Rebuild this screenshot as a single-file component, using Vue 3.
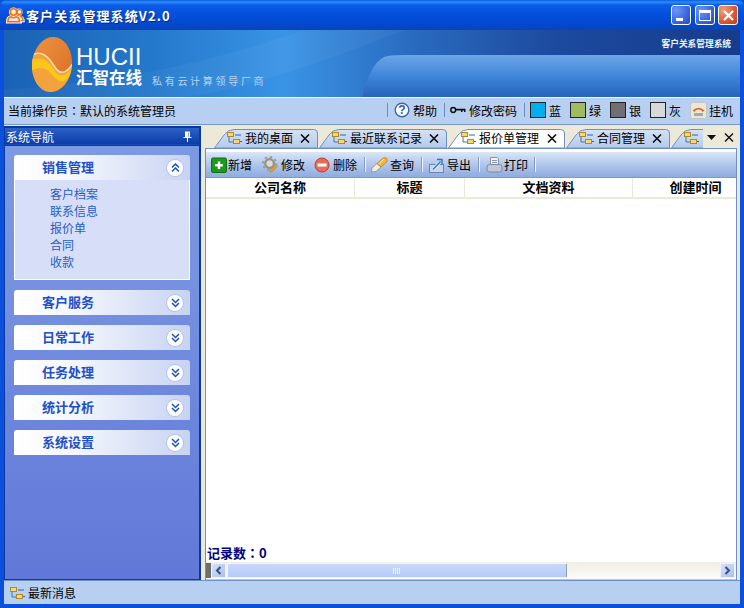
<script setup>
const tabs = [
  { label: '我的桌面', w: 105 },
  { label: '最近联系记录', w: 129 },
  { label: '报价单管理', w: 118, active: true },
  { label: '合同管理', w: 105 },
  { label: '', w: 45, cut: true }
]
const tabPath = (w) => `M1.5 19 L11 6 Q15 0.5 21 0.5 L${w - 4.5} 0.5 Q${w - 0.5} 0.5 ${w - 0.5} 4 L${w - 0.5} 19 Z`
const tools = [
  { key: 'add', label: '新增', w: 51, slot: 17 },
  { key: 'edit', label: '修改', w: 52, slot: 19 },
  { key: 'del', label: '删除', w: 57, slot: 19, sep: 5 },
  { key: 'find', label: '查询', w: 57, slot: 19, sep: 5 },
  { key: 'out', label: '导出', w: 58, slot: 19, sep: 6 },
  { key: 'print', label: '打印', w: 52, slot: 18, sep: 2 }
]
const cols = [
  { label: '公司名称', w: 149 },
  { label: '标题', w: 110 },
  { label: '文档资料', w: 168 },
  { label: '创建时间', w: 126 }
]
const links = ['客户档案', '联系信息', '报价单', '合同', '收款']
const groups = ['客户服务', '日常工作', '任务处理', '统计分析', '系统设置']
const swatches = [
  { label: '蓝', color: '#00b0ee' },
  { label: '绿', color: '#a0bc60' },
  { label: '银', color: '#707074' },
  { label: '灰', color: '#d8d8d8' }
]
</script>

<template>
  <div class="win">
    <header class="title">
      <svg class="appicon" width="19" height="18" viewBox="0 0 19 18">
        <path d="M1 16.5 Q1 11 4 10.5 L11 10.5 Q15 11 15 16.5 Z" fill="#fff" stroke="#fff" stroke-width="2" />
        <circle cx="7.5" cy="6" r="4.6" fill="#fff" />
        <circle cx="13" cy="6" r="3.6" fill="#fff" />
        <path d="M13 10 Q18 10.5 18 15.5 L15 15.5" fill="#fff" stroke="#fff" stroke-width="1.5" />
        <circle cx="7.5" cy="6" r="3.2" fill="#ffe8cc" stroke="#f07010" stroke-width="1.6" />
        <circle cx="13.4" cy="6" r="2.4" fill="none" stroke="#f07010" stroke-width="1.4" />
        <path d="M1.8 15.8 Q2 11 5 10.8 Q7.5 12.6 10 10.8 Q13.4 11 13.6 15.8 Z" fill="#fdd" stroke="#f07010" stroke-width="1.6" />
        <path d="M13.6 10.2 Q17 10.8 17.2 14.6 H14.8" fill="none" stroke="#f07010" stroke-width="1.4" />
      </svg>
      <span class="title-text">客户关系管理系统V2.0</span>
      <div class="caps">
        <div class="cap blue"><i class="min"></i></div>
        <div class="cap blue"><i class="max"></i></div>
        <div class="cap red">
          <svg width="13" height="13" viewBox="0 0 13 13"><path d="M2 2 L11 11 M11 2 L2 11" stroke="#fff" stroke-width="2.2" /></svg>
        </div>
      </div>
    </header>

    <div class="frame">
      <div class="banner">
        <svg class="banner-art" width="736" height="67" viewBox="0 0 736 67">
          <defs>
            <linearGradient id="bg" x1="0" y1="0" x2="1" y2="0">
              <stop offset="0" stop-color="#1a62b4" />
              <stop offset="0.2" stop-color="#2478cc" />
              <stop offset="0.38" stop-color="#3a94e6" />
              <stop offset="0.55" stop-color="#2a6cc0" />
              <stop offset="0.75" stop-color="#1c4a9e" />
              <stop offset="1" stop-color="#163c8c" />
            </linearGradient>
            <linearGradient id="wave" x1="0" y1="0" x2="0" y2="1">
              <stop offset="0" stop-color="#6ca6e6" />
              <stop offset="0.5" stop-color="#3f86da" />
              <stop offset="1" stop-color="#2764bc" />
            </linearGradient>
            <linearGradient id="orb" x1="0" y1="0" x2="1" y2="1">
              <stop offset="0" stop-color="#f09a48" />
              <stop offset="1" stop-color="#d8641c" />
            </linearGradient>
            <clipPath id="orbclip">
              <ellipse cx="48" cy="34.5" rx="20" ry="27.5" transform="rotate(5 48 34.5)" />
            </clipPath>
          </defs>
          <rect width="736" height="67" fill="url(#bg)" />
          <path d="M0 60 Q160 50 300 0 L400 0 Q250 60 180 67 L0 67 Z" fill="#ffffff" opacity="0.04" />
          <path d="M358 67 Q368 28 384 26 Q390 25 400 25 L736 25 L736 67 Z" fill="url(#wave)" />
          <g clip-path="url(#orbclip)">
            <rect x="20" y="0" width="56" height="70" fill="url(#orb)" />
            <path d="M20 32 C32 18 42 22 50 36 C56 46 62 44 70 32 L70 70 L20 70 Z" fill="#f4a23c" />
            <path d="M20 32 C32 18 42 22 50 36 C56 46 62 44 70 32" fill="none" stroke="#f8dcb0" stroke-width="1.6" />
            <path d="M26 30 C38 26 44 30 50 40 C55 48 62 47 68 38 C64 54 56 54 49 46 C43 38 36 35 26 42 Z" fill="#fcc818" />
          </g>
          <text x="72" y="35" class="brand-en">HUCII</text>
        </svg>
        <div class="brand">
          <span class="brand-cn">汇智在线</span>
          <span class="brand-sub">私有云计算领导厂商</span>
        </div>
        <div class="banner-name">客户关系管理系统</div>
      </div>

      <div class="opbar">
        <span class="op">当前操作员<span class="colon">：</span>默认的系统管理员</span>
        <div class="opright">
          <i class="sep"></i>
          <span class="opitem help">
            <svg width="16" height="16" viewBox="0 0 16 16"><circle cx="8" cy="8" r="6.8" fill="#fff" stroke="#3d67a8" stroke-width="1.4" /><text x="8" y="12" text-anchor="middle" class="q">?</text></svg>
            帮助
          </span>
          <i class="sep"></i>
          <span class="opitem pwd">
            <svg width="16" height="8" viewBox="0 0 16 8"><circle cx="3.2" cy="4" r="2.4" fill="none" stroke="#111" stroke-width="1.5" /><path d="M5.5 2.7 H15.5 V6 H14 V4.6 H12.5 V6 H11 V4.6 H5.5 Z" fill="#111" /></svg>
            修改密码
          </span>
          <i class="sep"></i>
          <span v-for="s in swatches" :key="s.label" class="swatch-item">
            <i class="swatch" :style="{ background: s.color }"></i>{{ s.label }}
          </span>
          <span class="opitem hang">
            <svg width="17" height="17" viewBox="0 0 17 17">
              <rect x="0.5" y="0.5" width="16" height="16" rx="2" fill="#e9e6da" stroke="#c4c4c0" />
              <path d="M2.5 8.5 Q8.5 3 14.5 8.5 L12.5 10 L11 8 Q8.5 7 6 8 L4.5 10 Z" fill="#e8641c" />
              <rect x="4" y="11" width="9" height="3" fill="#a8a8a8" />
            </svg>
            挂机
          </span>
        </div>
      </div>

      <div class="main">
        <aside class="nav">
          <div class="nav-head">
            <span>系统导航</span>
            <svg width="9" height="11" viewBox="0 0 9 11"><path d="M2 0.5 H7 V6 H8.5 V7 H5 V11 H4 V7 H0.5 V6 H2 Z M5.5 1.5 V6 H6 V1.5 Z" fill="#fff" fill-rule="evenodd" /></svg>
          </div>
          <div class="nav-body">
            <section class="group open">
              <div class="g-head">
                <span class="g-name">销售管理</span>
                <span class="chev">
                  <svg width="9" height="10" viewBox="0 0 9 10"><path d="M1 4.5 L4.5 1 L8 4.5 M1 8.5 L4.5 5 L8 8.5" fill="none" stroke="#1c4fc0" stroke-width="1.5" /></svg>
                </span>
              </div>
              <ul class="g-links">
                <li v-for="l in links" :key="l">{{ l }}</li>
              </ul>
            </section>
            <section v-for="g in groups" :key="g" class="group">
              <div class="g-head">
                <span class="g-name">{{ g }}</span>
                <span class="chev">
                  <svg width="9" height="10" viewBox="0 0 9 10"><path d="M1 1 L4.5 4.5 L8 1 M1 5 L4.5 8.5 L8 5" fill="none" stroke="#1c4fc0" stroke-width="1.5" /></svg>
                </span>
              </div>
            </section>
          </div>
        </aside>

        <div class="work">
          <div class="tabstrip">
            <div class="tabs">
              <div v-for="t in tabs" :key="t.w + t.label" class="tab" :class="{ active: t.active, cut: t.cut }" :style="{ width: t.w + 'px' }">
                <svg class="tab-shape" :width="t.w" height="20" :viewBox="`0 0 ${t.w} 20`">
                  <defs>
                    <linearGradient id="tabg" x1="0" y1="0" x2="0" y2="1">
                      <stop offset="0" stop-color="#d6e2f6" />
                      <stop offset="1" stop-color="#b4cbec" />
                    </linearGradient>
                  </defs>
                  <path :d="tabPath(t.w)" :fill="t.active ? '#ffffff' : 'url(#tabg)'" stroke="#6f8fc8" />
                </svg>
                <svg class="tree" width="15" height="12" viewBox="0 0 15 12">
                  <rect x="0.5" y="0.5" width="6" height="4" fill="#f6d67a" stroke="#b08a28" />
                  <path d="M2 5 V10 H6" fill="none" stroke="#3a7ab0" />
                  <rect x="6.5" y="7.5" width="6" height="4" fill="#f6d67a" stroke="#b08a28" />
                  <path d="M8 3 H14 M13 9.5 H15" stroke="#2a6aa8" />
                </svg>
                <span v-if="t.label" class="tab-label">{{ t.label }}</span>
                <svg v-if="!t.cut" class="tab-x" width="10" height="9" viewBox="0 0 10 9"><path d="M1 0.5 L9 8.5 M9 0.5 L1 8.5" stroke="#111" stroke-width="1.6" /></svg>
              </div>
            </div>
            <div class="tab-ctrl">
              <svg width="9" height="5" viewBox="0 0 9 5"><path d="M0 0 H9 L4.5 5 Z" fill="#111" /></svg>
              <svg width="10" height="9" viewBox="0 0 10 9"><path d="M1 0.5 L9 8.5 M9 0.5 L1 8.5" stroke="#111" stroke-width="1.4" /></svg>
            </div>
          </div>

          <div class="pane">
            <div class="toolbar">
              <div v-for="t in tools" :key="t.key" class="tool" :style="{ width: t.w + 'px' }">
                <span class="ico" :style="{ width: t.slot + 'px' }">
                  <svg v-if="t.key === 'add'" width="16" height="16" viewBox="0 0 16 16"><rect x="0.5" y="1" width="15" height="14.5" rx="1.5" fill="#1c9a1c" stroke="#107010" /><path d="M8 4.5 V12 M4.2 8.2 H11.8" stroke="#fff" stroke-width="2.4" /></svg>
                  <svg v-else-if="t.key === 'edit'" width="17" height="17" viewBox="0 0 18 18"><circle cx="8" cy="8" r="4.6" fill="#dcdcd0" stroke="#94948a" stroke-width="2.4" /><circle cx="8" cy="8" r="7" fill="none" stroke="#9c9c90" stroke-width="2" stroke-dasharray="2.6 2.9" /><path d="M9 15 L14.5 9 L16.6 10.8 L11 16.6 L8.6 17.2 Z" fill="#ee9c34" stroke="#b87418" stroke-width="0.5" /></svg>
                  <svg v-else-if="t.key === 'del'" width="16" height="16" viewBox="0 0 16 16"><circle cx="8" cy="8" r="7" fill="#ec6a58" stroke="#b84030" /><rect x="3.5" y="6.5" width="9" height="3" fill="#fff" /></svg>
                  <svg v-else-if="t.key === 'find'" width="17" height="16" viewBox="0 0 17 16"><path d="M0.5 15 L1 11 L6 6.5 L10 10 L5 14.5 Z" fill="#f2eedc" stroke="#8a8470" stroke-width="0.7" /><path d="M6 6.5 L12 1 Q14.5 0 16 1.5 Q17 3.5 15.5 5 L10 10 Z" fill="#f2b838" stroke="#b07c18" stroke-width="0.7" /><path d="M7.5 7 L13 2.2" stroke="#fbe8a8" /></svg>
                  <svg v-else-if="t.key === 'out'" width="17" height="16" viewBox="0 0 17 16"><rect x="1.5" y="7.5" width="14" height="8" fill="#c8d6ee" stroke="#6a84b4" /><path d="M5 12.5 L12 5" fill="none" stroke="#e8f0fb" stroke-width="3" /><path d="M5 12.5 L12.5 4.5" fill="none" stroke="#2c70c8" stroke-width="1.3" /><path d="M9 2.5 H14 V7.5" fill="none" stroke="#2c70c8" stroke-width="1.3" /></svg>
                  <svg v-else width="17" height="16" viewBox="0 0 17 16"><path d="M4.5 0.5 H11 L12.5 2 V8.5 H4.5 Z" fill="#f4f4f0" stroke="#8a94a8" /><path d="M6 3.5 H11 M6 5.5 H11" stroke="#8a94a8" /><rect x="1" y="7.5" width="15" height="7.5" rx="2.5" fill="#c0c8d8" stroke="#7c88a0" /></svg>
                </span>
                <span class="tool-label">{{ t.label }}</span>
                <i v-if="t.sep" class="tsep" :style="{ right: t.sep + 'px' }"></i>
              </div>
            </div>
            <div class="cols">
              <div v-for="c in cols" :key="c.label" class="col" :style="{ width: c.w + 'px' }">{{ c.label }}</div>
            </div>
            <div class="rows"></div>
            <div class="count">记录数<span class="colon">：</span>0</div>
            <div class="hscroll">
              <i class="grip"></i>
              <div class="sb-btn">
                <svg width="7" height="9" viewBox="0 0 7 9"><path d="M5.5 1 L2 4.5 L5.5 8" fill="none" stroke="#3a5078" stroke-width="2" /></svg>
              </div>
              <div class="sb-thumb">
                <svg width="8" height="6" viewBox="0 0 8 6"><path d="M0.5 0 V6 M2.5 0 V6 M4.5 0 V6 M6.5 0 V6" stroke="#f0f5ff" /></svg>
              </div>
              <div class="sb-track"></div>
              <div class="sb-btn">
                <svg width="7" height="9" viewBox="0 0 7 9"><path d="M1.5 1 L5 4.5 L1.5 8" fill="none" stroke="#3a5078" stroke-width="2" /></svg>
              </div>
            </div>
          </div>
        </div>
      </div>

      <footer class="status">
        <svg width="15" height="12" viewBox="0 0 15 12">
          <rect x="0.5" y="0.5" width="6" height="4" fill="#f6d67a" stroke="#b08a28" />
          <path d="M2 5 V10 H6" fill="none" stroke="#3a7ab0" />
          <rect x="6.5" y="7.5" width="6" height="4" fill="#f6d67a" stroke="#b08a28" />
          <path d="M8 3 H14 M13 9.5 H15" stroke="#2a6aa8" />
        </svg>
        <span>最新消息</span>
      </footer>
    </div>
  </div>
</template>

<style>
html, body { margin: 0; padding: 0; overflow: hidden; background: #ece9d8; }
</style>

<style scoped>
.win {
  width: 744px;
  height: 608px;
  display: flex;
  flex-direction: column;
  box-sizing: border-box;
  overflow: hidden;
  background: #0a50dc;
  font-family: "Noto Sans CJK SC", "Liberation Sans", sans-serif;
  font-size: 12px;
  color: #000;
}
.title {
  height: 30px;
  flex: none;
  display: flex;
  align-items: center;
  padding: 0 6px 0 6px;
  box-sizing: border-box;
  background: linear-gradient(180deg, #0a5ae0 0, #2f8cf8 2px, #0a5ce8 5px, #0450dc 14px, #0348d0 24px, #0a44b4 30px);
  border-radius: 7px 7px 0 0;
}
.appicon { flex: none; }
.title-text {
  margin-left: 1px;
  color: #fff;
  font-weight: 700;
  font-size: 13px;
  letter-spacing: 1.1px;
  text-shadow: 1px 1px 0 #0a2a80;
}
.caps { margin-left: auto; display: flex; }
.cap {
  width: 20px;
  height: 20px;
  box-sizing: border-box;
  border: 1px solid #fff;
  border-radius: 3px;
  display: flex;
  align-items: center;
  justify-content: center;
  position: relative;
  margin-left: 3px;
}
.cap:nth-child(2) { margin-left: 4px; }
.cap.blue { background: radial-gradient(circle at 25% 25%, #6a96f4, #3a66dc 60%, #2248c0); }
.cap.red { background: radial-gradient(circle at 25% 25%, #f0a080, #e0562c 60%, #c43c14); }
.min { width: 7px; height: 3px; background: #fff; align-self: flex-end; margin: 0 4px 3px 0; }
.max { width: 12px; height: 11px; box-sizing: border-box; border: 1px solid #fff; border-top-width: 3px; }
.frame {
  flex: 1;
  min-height: 0;
  margin: 0 4px 4px;
  display: flex;
  flex-direction: column;
  background: #ece9d8;
}
.banner {
  height: 67px;
  flex: none;
  position: relative;
  overflow: hidden;
  display: flex;
  justify-content: space-between;
}
.banner-art { position: absolute; left: 0; top: 0; }
.brand-en {
  font-family: "Liberation Sans", sans-serif;
  font-size: 24px;
  fill: #fff;
}
.brand { position: relative; margin: 37px 0 0 72px; color: #fff; display: flex; align-items: center; height: 20px; }
.brand-cn { font-size: 16.5px; line-height: 20px; font-weight: 700; width: 71px; }
.brand-sub { font-size: 10px; letter-spacing: 2.7px; margin: 6px 0 0 5px; color: #b9d4f2; }
.banner-name {
  position: relative;
  color: #eef3fa;
  font-size: 8.7px;
  font-weight: 700;
  margin: 6px 9px 0 0;
  line-height: 16px;
}
.opbar {
  height: 28px;
  flex: none;
  box-sizing: border-box;
  border-top: 1px solid #f6f8fc;
  border-bottom: 1px solid #7c98c8;
  background: #b7cff0;
  display: flex;
  align-items: center;
  padding: 0 7px 2px 4px;
  font-size: 12px;
}
.colon { font-family: "Noto Sans CJK TC", sans-serif; }
.opright { margin-left: auto; display: flex; align-items: center; }
.sep { width: 1px; height: 14px; background: #6c8cc0; }
.opitem { display: flex; align-items: center; }
.help { margin: 0 7px 0 6px; gap: 3px; }
.pwd { margin: 0 7px 0 5px; gap: 3px; }
.q { font: 700 12px "Liberation Sans", sans-serif; fill: #2a5aa8; }
.swatch-item { display: flex; align-items: center; gap: 3px; width: 40px; flex: none; }
.sep + .swatch-item { margin-left: 5px; }
.swatch { width: 14px; height: 14px; border: 1px solid #222; display: block; }
.hang { gap: 2px; }
.main { flex: 1; min-height: 0; display: flex; }
.nav {
  width: 197px;
  flex: none;
  box-sizing: border-box;
  border: 1px solid #0a3aa0;
  border-top-width: 2px;
  border-right-width: 2px;
  background: #1448b4;
  display: flex;
  flex-direction: column;
  margin-top: 1px;
}
.nav-head {
  height: 16px;
  flex: none;
  color: #fff;
  display: flex;
  align-items: center;
  justify-content: space-between;
  padding: 0 7px 0 1px;
  background: linear-gradient(180deg, #2c62c8, #0c3ca8);
  font-size: 12px;
}
.nav-body {
  flex: 1;
  margin-top: 1px;
  border-top: 1px solid #0a3aa0;
  background: linear-gradient(180deg, #7c9ae2 0, #7692e0 30%, #6278d8 100%);
  padding: 9px 9px 0;
  display: flex;
  flex-direction: column;
  gap: 10px;
}
.group { width: 176px; }
.g-head {
  height: 25px;
  box-sizing: border-box;
  padding: 0 7px 2px 28px;
  border-radius: 3px 3px 0 0;
  background: linear-gradient(90deg, #fff 0, #f4f6fc 35%, #c6d3f2 100%);
  color: #2150c8;
  font-weight: 700;
  display: flex;
  align-items: center;
  justify-content: space-between;
}
.g-name { font-size: 13px; line-height: 18px; }
.chev {
  width: 16px;
  height: 16px;
  margin-top: 2px;
  border-radius: 50%;
  background: #fff;
  box-shadow: 0 0 0 1px #b6c2e4;
  display: flex;
  align-items: center;
  justify-content: center;
}
.g-links {
  margin: 0;
  padding: 5px 0 8px 35px;
  list-style: none;
  height: 100px;
  box-sizing: border-box;
  background: #d6dff7;
  border: 1px solid #fff;
  border-top: 0;
  color: #2a5cc8;
  line-height: 17px;
}
.work { flex: 1; min-width: 0; display: flex; flex-direction: column; padding: 0 3px 0 4px; }
.tabstrip { height: 20px; margin-top: 3px; flex: none; display: flex; justify-content: space-between; position: relative; }
.tabs { display: flex; width: 498px; overflow: hidden; flex: none; padding-left: 8px; box-sizing: border-box; }
.tab {
  flex: none;
  height: 19px;
  position: relative;
  display: flex;
  align-items: center;
  padding-left: 14px;
  padding-bottom: 2px;
  box-sizing: border-box;
  margin-top: 1px;
}
.tab-shape { position: absolute; left: 0; top: 0; }
.tree { position: relative; flex: none; }
.tab-label { position: relative; margin-left: 3px; white-space: nowrap; }
.tab-x { position: absolute; right: 8px; top: 5px; }
.tab-ctrl { flex: 1; display: flex; align-items: center; justify-content: space-between; padding: 0 3px 1px 4px; box-sizing: border-box; }
.pane {
  flex: 1;
  min-height: 0;
  display: flex;
  flex-direction: column;
  border: 1px solid #6f8fc8;
  border-bottom: 0;
  background: #fff;
  position: relative;
}
.toolbar {
  height: 26px;
  flex: none;
  margin-top: 3px;
  display: flex;
  align-items: center;
  padding-left: 5px;
  background: linear-gradient(180deg, #dbe6f8 0, #b4c9ec 45%, #8eacdf 100%);
  border-bottom: 1px solid #7a9bd0;
  box-sizing: border-box;
}
.tool { display: flex; align-items: center; flex: none; position: relative; box-sizing: border-box; }
.ico { display: flex; align-items: center; flex: none; }
.tool-label { padding-bottom: 1px; }
.tsep { position: absolute; top: 1px; width: 1px; height: 15px; background: #f0f5fd; border-left: 1px solid #7f9ccc; }
.cols { height: 19px; flex: none; display: flex; overflow: hidden; border-bottom: 2px solid #ece9d8; }
.col {
  box-sizing: border-box;
  border-right: 1px solid #ece9d8;
  text-align: center;
  font-weight: 700;
  font-size: 13px;
  line-height: 18px;
  flex: none;
}
.rows { flex: 1; }
.count { height: 16px; line-height: 14px; padding-left: 1px; color: #000080; font-weight: 700; font-size: 13px; flex: none; }
.hscroll {
  height: 18px;
  flex: none;
  display: flex;
  align-items: stretch;
  background: linear-gradient(180deg, #f0ede2, #fcfcf8);
  box-sizing: border-box;
  padding: 1px 0;
  border-bottom: 1px solid #b8c8e4;
}
.grip { width: 5px; flex: none; background: #6e6e68; }
.sb-btn {
  width: 15px;
  flex: none;
  box-sizing: border-box;
  border: 1px solid #eef2fa;
  background: linear-gradient(135deg, #d6e2f8, #a8bff0);
  display: flex;
  align-items: center;
  justify-content: center;
  margin-right: 1px;
}
.hscroll .sb-btn:last-child { margin-left: auto; margin-right: 1px; }
.sb-thumb {
  width: 340px;
  flex: none;
  background: linear-gradient(180deg, #c8d8fc, #b4caf8);
  border: 1px solid #f0f4fc;
  border-right-color: #8c9cbc;
  box-sizing: border-box;
  border-radius: 2px;
  display: flex;
  align-items: center;
  justify-content: center;
}
.sb-track { flex: 1; }
.status {
  height: 24px;
  flex: none;
  box-sizing: border-box;
  border-top: 1px solid #6f8fc8;
  background: #b7cff0;
  display: flex;
  align-items: center;
  gap: 3px;
  padding: 0 0 0 6px;
}
</style>
